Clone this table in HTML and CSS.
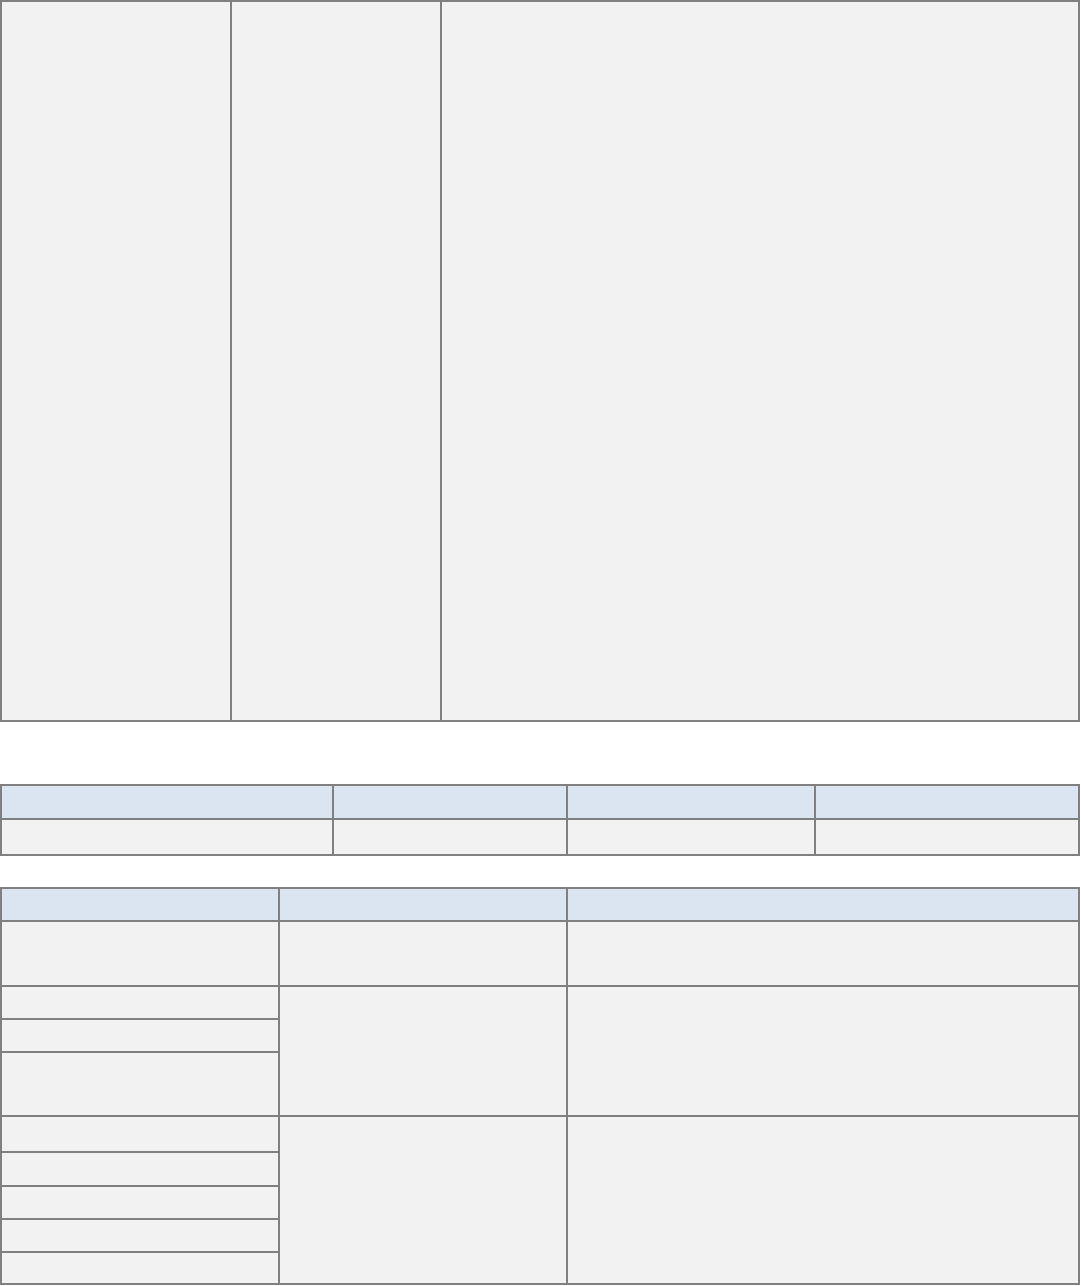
FILE: index.html
```html
<!DOCTYPE html>
<html lang="en">
<head>
<meta charset="utf-8">
<title>Tables</title>
<link rel="stylesheet" href="styles.css">
</head>
<body>
  <div class="grid layout-table">
    <div class="cell"></div>
    <div class="cell"></div>
    <div class="cell"></div>
  </div>

  <div class="grid summary-table">
    <div class="cell head"></div>
    <div class="cell head"></div>
    <div class="cell head"></div>
    <div class="cell head"></div>
    <div class="cell"></div>
    <div class="cell"></div>
    <div class="cell"></div>
    <div class="cell"></div>
  </div>

  <div class="grid detail-table">
    <div class="cell head"></div>
    <div class="cell head"></div>
    <div class="cell head"></div>

    <div class="cell c1 r2"></div>
    <div class="cell c2 r2"></div>
    <div class="cell c3 r2"></div>

    <div class="cell c1 r3"></div>
    <div class="cell c1 r4"></div>
    <div class="cell c1 r5"></div>
    <div class="cell c2 g2"></div>
    <div class="cell c3 g2"></div>

    <div class="cell c1 r6"></div>
    <div class="cell c1 r7"></div>
    <div class="cell c1 r8"></div>
    <div class="cell c1 r9"></div>
    <div class="cell c1 r10"></div>
    <div class="cell c2 g3"></div>
    <div class="cell c3 g3"></div>
  </div>
</body>
</html>
```

FILE: styles.css
```css
html, body {
  margin: 0;
  padding: 0;
  background: #ffffff;
  font-family: "Liberation Sans", Arial, sans-serif;
}

.grid {
  display: grid;
  width: 1080px;
  box-sizing: border-box;
  padding: 2px;
  gap: 2px;
  background: #808080;
}

.cell {
  background: #f2f2f2;
}

.cell.head {
  background: #dbe5f1;
}

.layout-table {
  grid-template-columns: 228px 208px 636px;
  grid-template-rows: 718px;
}

.summary-table {
  margin-top: 62px;
  grid-template-columns: 330px 232px 246px 262px;
  grid-template-rows: 32px 34px;
}

.detail-table {
  margin-top: 31px;
  grid-template-columns: 276px 286px 510px;
  grid-template-rows: 31px 63px 31px 31px 62px 34px 32px 31px 31px 30px;
}

.c1 { grid-column: 1; }
.c2 { grid-column: 2; }
.c3 { grid-column: 3; }

.r2 { grid-row: 2; }
.r3 { grid-row: 3; }
.r4 { grid-row: 4; }
.r5 { grid-row: 5; }
.r6 { grid-row: 6; }
.r7 { grid-row: 7; }
.r8 { grid-row: 8; }
.r9 { grid-row: 9; }
.r10 { grid-row: 10; }

.g2 { grid-row: 3 / 6; }
.g3 { grid-row: 6 / 11; }
```
